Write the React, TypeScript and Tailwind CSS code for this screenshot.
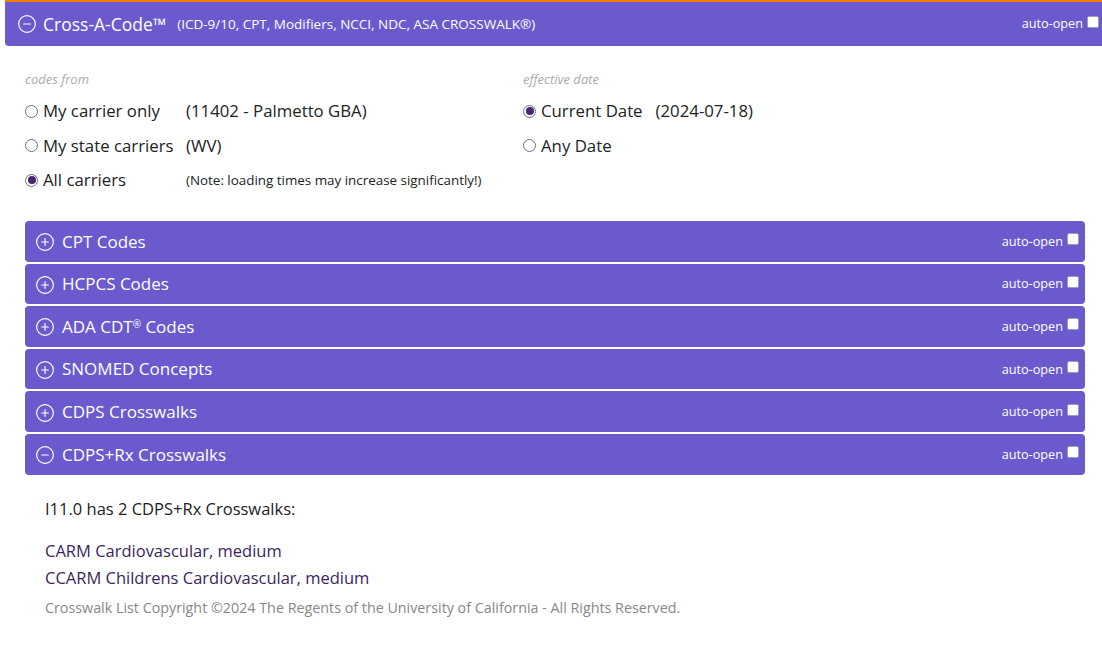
import { CirclePlus, CircleMinus } from 'lucide-react';

const font = { fontFamily: '"Segoe UI", "Open Sans", "Noto Sans", sans-serif' };

// auto-open checkbox shown on each bar
const AutoOpen = () => (
  <div className="flex items-center gap-[4px] text-[12.7px] text-white">
    <span>auto-open</span>
    <span className="inline-block w-[12px] h-[12px] bg-white border border-gray-400 rounded-[2px] -mt-[4px]"></span>
  </div>
);

const Radio = ({ checked }: { checked?: boolean }) => (
  <span className="inline-flex items-center justify-center w-[13px] h-[13px] rounded-full border border-gray-500 bg-white mr-[5px]">
    {checked && <span className="w-[8px] h-[8px] rounded-full bg-[#4a2470]"></span>}
  </span>
);

const sections = [
  { label: <>CPT Codes</> },
  { label: <>HCPCS Codes</> },
  { label: <>ADA CDT<sup className="text-[10px]">®</sup> Codes</> },
  { label: <>SNOMED Concepts</> },
  { label: <>CDPS Crosswalks</> },
  { label: <>CDPS+Rx Crosswalks</>, open: true },
];

export default function App() {
  return (
    <div className="min-h-screen bg-white overflow-hidden text-[#222]" style={font}>
      <div className="pl-[5px] w-[1105px]">
        <div className="h-[46px] border-t-2 border-[#f07c00] bg-[#6a5acd] rounded-b-[4px] flex items-center justify-between pl-[12px] pr-[6px] text-white">
          <div className="flex items-center">
            <CircleMinus size={20} strokeWidth={1.4} className="mr-[6px]" />
            <span className="text-[17.5px]">Cross-A-Code™</span>
            <span className="text-[13.5px] ml-[11px]">(ICD-9/10, CPT, Modifiers, NCCI, NDC, ASA CROSSWALK®)</span>
          </div>
          <AutoOpen />
        </div>

        <div className="px-[20px]">
          <div className="flex pt-[24px]">
            <div className="w-[498px]">
              <div className="text-[13px] italic text-[#aaa] h-[18px]">codes from</div>
              <div className="flex items-center h-[34px] mt-[6px] text-[16.8px]">
                <div className="w-[161px] flex items-center"><Radio />My carrier only</div>
                <span>(11402 - Palmetto GBA)</span>
              </div>
              <div className="flex items-center h-[35px] text-[16.8px]">
                <div className="w-[161px] flex items-center"><Radio />My state carriers</div>
                <span>(WV)</span>
              </div>
              <div className="flex items-center h-[34px] text-[16.8px]">
                <div className="w-[161px] flex items-center"><Radio checked />All carriers</div>
                <span className="text-[13.4px]">(Note: loading times may increase significantly!)</span>
              </div>
            </div>
            <div>
              <div className="text-[13px] italic text-[#aaa] h-[18px]">effective date</div>
              <div className="flex items-center h-[34px] mt-[6px] text-[16.8px]">
                <Radio checked />Current Date
                <span className="ml-[13px]">(2024-07-18)</span>
              </div>
              <div className="flex items-center h-[35px] text-[16.8px]">
                <Radio />Any Date
              </div>
            </div>
          </div>

          <div className="mt-[24px] flex flex-col gap-[2px]">
            {sections.map((s, i) => (
              <div key={i} className="h-[40.6px] bg-[#6a5acd] rounded-[4px] flex items-center justify-between pl-[10px] pr-[6px] text-white">
                <div className="flex items-center text-[17px]">
                  {s.open ? (
                    <CircleMinus size={20} strokeWidth={1.4} className="mr-[7px] mt-[2px]" />
                  ) : (
                    <CirclePlus size={20} strokeWidth={1.4} className="mr-[7px] mt-[2px]" />
                  )}
                  <span>{s.label}</span>
                </div>
                <AutoOpen />
              </div>
            ))}
          </div>

          <div className="pl-[20px] pt-[22px]">
            <div className="text-[16.5px] h-[24px] leading-[24px]">I11.0 has 2 CDPS+Rx Crosswalks:</div>
            <div className="mt-[16px] text-[16.5px] leading-[27px] text-[#3d1f5c]">
              <div>CARM Cardiovascular, medium</div>
              <div>CCARM Childrens Cardiovascular, medium</div>
            </div>
            <div className="mt-[6px] text-[14.3px] text-[#888]">Crosswalk List Copyright ©2024 The Regents of the University of California - All Rights Reserved.</div>
          </div>
        </div>
      </div>
    </div>
  );
}
